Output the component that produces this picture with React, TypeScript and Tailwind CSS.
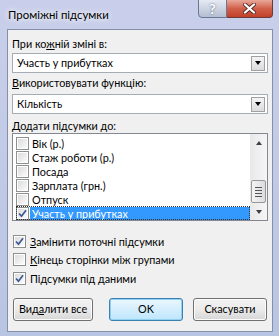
import { useState } from "react";

const fields = [
  { id: 1, label: "Вік (р.)", checked: false },
  { id: 2, label: "Стаж роботи (р.)", checked: false },
  { id: 3, label: "Посада", checked: false },
  { id: 4, label: "Зарплата (грн.)", checked: false },
  { id: 5, label: "Отпуск", checked: false },
  { id: 6, label: "Участь у прибутках", checked: true },
];

// small win7 style check mark
const Tick = () => (
  <svg width="9" height="9" viewBox="0 0 9 9">
    <path d="M1 4.5 L3.5 7.2 L8 1.2" fill="none" stroke="#3b5896" strokeWidth="1.7" />
  </svg>
);

const CheckBox = ({ checked }: { checked: boolean }) => (
  <div className="w-[13px] h-[13px] shrink-0 border border-[#8e8f8f] bg-white p-[1px]">
    <div className="w-full h-full bg-gradient-to-br from-[#dcdcdc] to-[#fbfbfb] flex items-center justify-center">
      {checked && <Tick />}
    </div>
  </div>
);

const ComboBox = ({ value }: { value: string }) => (
  <div className="h-[20px] flex items-center border border-[#a5acb5] bg-white pl-[4px] pr-[2px]">
    <span className="flex-1 leading-none">{value}</span>
    <div className="w-[14px] h-[15px] border border-[#a0a0a0] bg-gradient-to-b from-[#f4f4f4] to-[#dcdcdc] flex items-center justify-center">
      <div className="w-0 h-0 border-l-[3.5px] border-r-[3.5px] border-t-[4px] border-l-transparent border-r-transparent border-t-black" />
    </div>
  </div>
);

const Button = ({ children, primary }: { children: React.ReactNode; primary?: boolean }) => (
  <button
    className={
      primary
        ? "h-[23px] whitespace-nowrap rounded-[3px] border border-[#3c7fb1] bg-gradient-to-b from-[#eaf6fd] to-[#bee6fd] shadow-[inset_0_0_0_1px_#8fd0f3]"
        : "h-[23px] whitespace-nowrap rounded-[3px] border border-[#707070] bg-gradient-to-b from-[#f2f2f2] via-[#ebebeb] to-[#d6d6d6] shadow-[inset_0_0_0_1px_#fcfcfc]"
    }
  >
    {children}
  </button>
);

export default function App() {
  const [checks, setChecks] = useState([true, false, true]);

  return (
    <div className="w-[279px] h-[336px] overflow-hidden flex flex-col bg-gradient-to-b from-[#c9cfea] to-[#b8c5e2] text-[10.8px] text-black font-['Lato','Roboto',sans-serif]">
      {/* title bar */}
      <div className="h-[29px] flex justify-between items-start shrink-0">
        <span className="pl-[8px] pt-[6px] text-[11.4px] leading-[18px] [text-shadow:0_0_8px_#f4f6fc,0_0_4px_#f4f6fc]">
          Проміжні підсумки
        </span>
        <div className="flex mr-[6px] mt-[-1px]">
          <div className="w-[29px] h-[19px] rounded-bl-[4px] border border-[#6b7893] bg-gradient-to-b from-[#e6eaf3] via-[#cdd4e2] to-[#b3bed2] flex items-center justify-center text-white font-bold text-[14px] [text-shadow:0_0_2px_#4a5670]">
            ?
          </div>
          <div className="w-[46px] h-[19px] rounded-br-[4px] border border-l-0 border-[#6b3b38] bg-gradient-to-b from-[#e9a89a] via-[#d0604a] to-[#c23f28] flex items-center justify-center">
            <svg width="13" height="11" viewBox="0 0 13 11">
              <path d="M2 1.5 L11 9.5 M11 1.5 L2 9.5" stroke="#5a2a24" strokeWidth="4" strokeLinecap="round" />
              <path d="M2 1.5 L11 9.5 M11 1.5 L2 9.5" stroke="#fff" strokeWidth="2.3" strokeLinecap="round" />
            </svg>
          </div>
        </div>
      </div>

      {/* client area */}
      <div className="ml-[7px] mr-[6px] h-[303px] border border-[#8590a8] bg-[#f0f0f0] px-[4px] pt-[6px] flex flex-col">
        <div className="leading-[15px]">
          При ко<u>ж</u>ній зміні в:
        </div>
        <div className="mt-[2px]">
          <ComboBox value="Участь у прибутках" />
        </div>
        <div className="leading-[15px] mt-[2px]">
          <u>В</u>икористовувати функцію:
        </div>
        <div className="mt-[4px]">
          <ComboBox value="Кількість" />
        </div>
        <div className="leading-[15px] mt-[4px]">
          <u>Д</u>одати підсумки до:
        </div>

        {/* list with checkboxes */}
        <div className="h-[88px] border border-[#828790] bg-white flex">
          <div className="flex-1 pt-[2px] pl-[3px]">
            {fields.map((f) => (
              <div
                key={f.id}
                className={
                  f.checked
                    ? "h-[14px] flex items-center outline outline-1 outline-dotted outline-[#333] -outline-offset-1"
                    : "h-[14px] flex items-center"
                }
              >
                <CheckBox checked={f.checked} />
                <span
                  className={
                    f.checked
                      ? "ml-[1px] flex-1 h-[13px] leading-[13px] pl-[2px] bg-[#3399ff] text-white"
                      : "ml-[1px] pl-[2px] leading-[13px]"
                  }
                >
                  {f.label}
                </span>
              </div>
            ))}
          </div>
          {/* scrollbar */}
          <div className="w-[17px] bg-gradient-to-r from-[#e9e9e9] to-[#f5f5f5] flex flex-col items-center">
            <div className="h-[17px] w-full flex items-center justify-center">
              <div className="w-0 h-0 border-l-[3.5px] border-r-[3.5px] border-b-[4px] border-l-transparent border-r-transparent border-b-[#404040]" />
            </div>
            <div className="flex-1" />
            <div className="w-[15px] h-[23px] rounded-[2px] border border-[#979797] bg-gradient-to-r from-[#f4f4f4] to-[#dcdcdc] flex flex-col items-center justify-center gap-[2px]">
              <div className="w-[7px] h-[1px] bg-[#555]" />
              <div className="w-[7px] h-[1px] bg-[#555]" />
              <div className="w-[7px] h-[1px] bg-[#555]" />
              <div className="w-[7px] h-[1px] bg-[#555]" />
            </div>
            <div className="h-[17px] w-full flex items-center justify-center">
              <div className="w-0 h-0 border-l-[3.5px] border-r-[3.5px] border-t-[4px] border-l-transparent border-r-transparent border-t-[#404040]" />
            </div>
          </div>
        </div>

        {/* options */}
        <div className="mt-[11px] flex flex-col pl-[1px]">
          {[
            <>
              <u>З</u>амінити поточні підсумки
            </>,
            <>
              <u>К</u>інець сторінки між групами
            </>,
            <>Підсумки під даними</>,
          ].map((text, i) => (
            <label key={i} className="h-[18.5px] flex items-center gap-[4px]">
              <input
                type="checkbox"
                className="hidden"
                checked={checks[i]}
                onChange={() => setChecks(checks.map((c, j) => (j === i ? !c : c)))}
              />
              <CheckBox checked={checks[i]} />
              <span className="leading-[15px]">{text}</span>
            </label>
          ))}
        </div>

        {/* buttons */}
        <div className="mt-[10px] flex pl-[1px]">
          <div className="w-[80px] flex flex-col">
            <Button>
              Вид<u>а</u>лити все
            </Button>
          </div>
          <div className="ml-[16px] w-[74px] flex flex-col">
            <Button primary>OK</Button>
          </div>
          <div className="ml-[10px] w-[74px] flex flex-col">
            <Button>Скасувати</Button>
          </div>
        </div>
      </div>
    </div>
  );
}
